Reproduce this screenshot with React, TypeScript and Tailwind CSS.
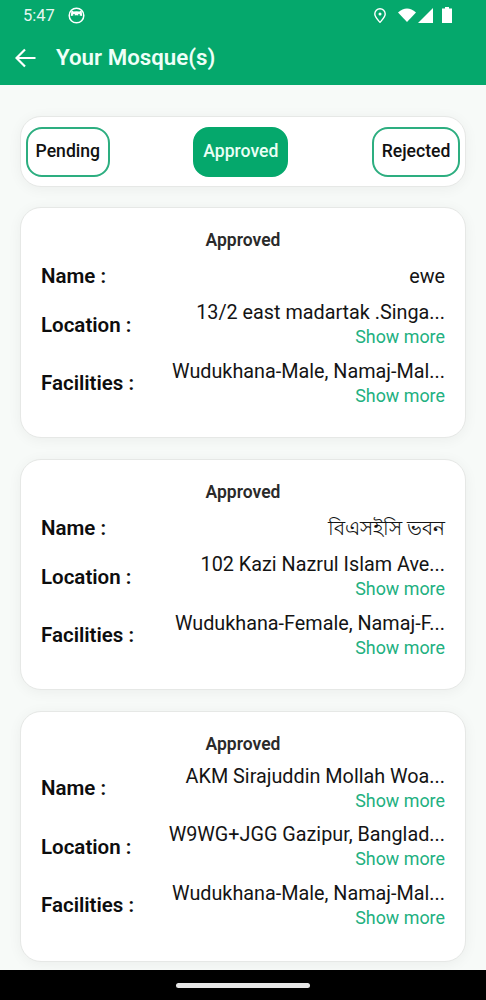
const CARDS = [
  {
    rows: [
      { label: 'Name :', value: 'ewe', more: false },
      { label: 'Location :', value: '13/2 east madartak .Singa...', more: true },
      { label: 'Facilities :', value: 'Wudukhana-Male, Namaj-Mal...', more: true },
    ],
  },
  {
    rows: [
      { label: 'Name :', value: 'বিএসইসি ভবন', more: false },
      { label: 'Location :', value: '102 Kazi Nazrul Islam Ave...', more: true },
      { label: 'Facilities :', value: 'Wudukhana-Female, Namaj-F...', more: true },
    ],
  },
  {
    rows: [
      { label: 'Name :', value: 'AKM Sirajuddin Mollah Woa...', more: true },
      { label: 'Location :', value: 'W9WG+JGG Gazipur, Banglad...', more: true },
      { label: 'Facilities :', value: 'Wudukhana-Male, Namaj-Mal...', more: true },
    ],
  },
];

function StatusBar() {
  return (
    <div className="flex h-[30px] items-center pl-[23px] pr-[34px] text-white">
      <span className="pt-[2px] text-[16.5px] leading-none opacity-90">5:47</span>
      <svg className="ml-[13px]" width="17" height="17" viewBox="0 0 17 17">
        <circle cx="8.5" cy="8.5" r="7.3" fill="none" stroke="white" strokeWidth="1.5" />
        <path d="M3.4 3.2 L5.6 4.6 Q8.5 3.7 11.4 4.6 L13.6 3.2 L14.2 9 Q8.5 7.6 2.8 9 Z" fill="white" />
        <circle cx="6" cy="8" r="0.9" fill="#05a86c" />
        <circle cx="11" cy="8" r="0.9" fill="#05a86c" />
      </svg>
      <div className="ml-auto flex items-center">
        <svg width="12" height="15" viewBox="0 0 12 15">
          <path
            d="M6 .8a5.2 5.2 0 0 0-5.2 5.2c0 3 3.2 6 5.2 8.4 2-2.4 5.2-5.4 5.2-8.4A5.2 5.2 0 0 0 6 .8Z"
            fill="none"
            stroke="white"
            strokeWidth="1.4"
          />
          <circle cx="6" cy="6" r="1.5" fill="white" />
        </svg>
        <svg className="ml-[12px]" width="18" height="14" viewBox="0 0 18 14">
          <path d="M0 4.4Q9-3.4 18 4.4L9 14Z" fill="white" />
        </svg>
        <svg className="ml-[2px]" width="15" height="15" viewBox="0 0 15 15">
          <path d="M15 0V15H0Z" fill="white" />
        </svg>
        <svg className="ml-[9px]" width="10" height="16" viewBox="0 0 10 16">
          <path d="M3 0H7V1.5H10V16H0V1.5H3Z" fill="white" />
        </svg>
      </div>
    </div>
  );
}

function Tab({ label, active, className }: { label: string; active?: boolean; className: string }) {
  return (
    <div
      className={`flex h-[50px] items-center justify-center rounded-[16px] border-[2px] text-[17.6px] font-medium ${
        active ? 'border-[#05a86c] bg-[#05a86c] text-[#eafff5]' : 'border-[#2dae80] bg-white text-[#111]'
      } ${className}`}
    >
      {label}
    </div>
  );
}

function MosqueCard({ rows, tall }: { rows: (typeof CARDS)[number]['rows']; tall?: boolean }) {
  return (
    <div
      className={`rounded-[21px] border border-[#e6e8e6] bg-white px-[20px] pt-[21px] shadow-[0_2px_14px_rgba(0,0,0,0.05)] ${
        tall ? 'h-[251px]' : 'h-[231px]'
      }`}
    >
      <div className="text-center text-[17.5px] font-semibold leading-[22px] text-[#2a2a2a]">Approved</div>
      <div className="mt-[8.5px] flex flex-col gap-[9.5px]">
        {rows.map((row) => (
          <div
            key={row.label}
            className={`flex min-h-[31px] items-center justify-between ${row.more ? '' : 'pt-[2px]'}`}
          >
            <span className="text-[20.5px] font-semibold leading-[26px] text-[#0d0d0d]">{row.label}</span>
            <div className="flex flex-col items-end">
              <span className="whitespace-nowrap text-[19.8px] leading-[25px] text-[#141414]">{row.value}</span>
              {row.more && <span className="text-[17.9px] leading-[24px] text-[#22b07f]">Show more</span>}
            </div>
          </div>
        ))}
      </div>
    </div>
  );
}

export default function App() {
  return (
    <div className="flex h-[1000px] w-[486px] flex-col overflow-hidden bg-[#f7faf8] font-['Roboto','Noto_Sans',sans-serif]">
      <div className="h-[85px] shrink-0 bg-[#05a86c]">
        <StatusBar />
        <div className="flex h-[55px] items-center pl-[15px] text-white">
          <svg width="21" height="20" viewBox="0 0 21 20" fill="none" stroke="white" strokeWidth="2.2">
            <path d="M20.5 10H1.8M10 1.5L1.5 10L10 18.5" />
          </svg>
          <span className="ml-[20px] text-[22.3px] font-semibold text-[#eefff8]">Your Mosque(s)</span>
        </div>
      </div>

      <div className="flex flex-1 flex-col gap-[21px] overflow-hidden px-[20px] pt-[31px]">
        <div className="-mb-[1px] flex h-[71px] shrink-0 items-center justify-between rounded-[21px] border border-[#e6e8e6] bg-white px-[5px] shadow-[0_2px_14px_rgba(0,0,0,0.05)]">
          <Tab label="Pending" className="w-[83.6px]" />
          <Tab label="Approved" active className="w-[95px]" />
          <Tab label="Rejected" className="w-[88px]" />
        </div>
        {CARDS.map((card, i) => (
          <div key={i} className="shrink-0">
            <MosqueCard rows={card.rows} tall={i === 2} />
          </div>
        ))}
      </div>

      <div className="flex h-[30px] shrink-0 items-center justify-center bg-black">
        <div className="h-[5px] w-[134px] rounded-full bg-[#e6e6e6]" />
      </div>
    </div>
  );
}
